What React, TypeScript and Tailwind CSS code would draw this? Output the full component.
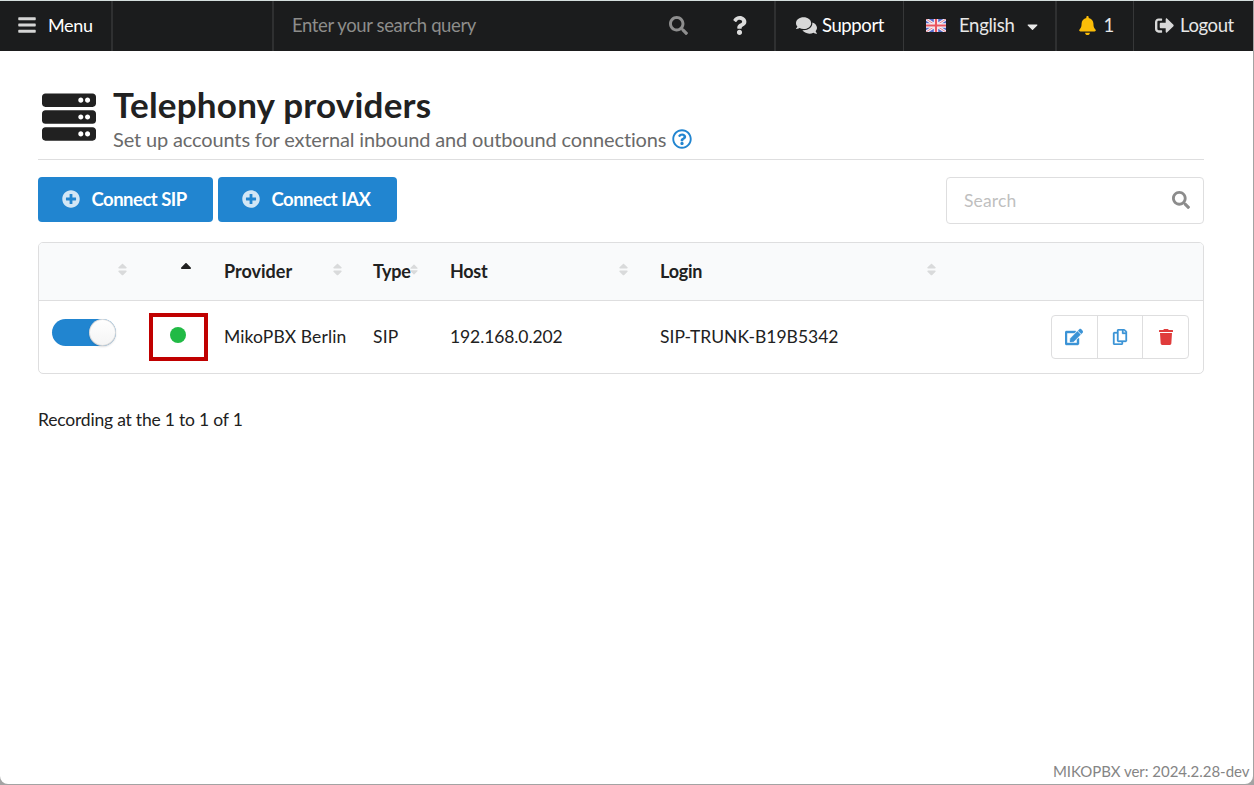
import type { ReactNode } from "react";
import {
  FaBars,
  FaBell,
  FaCaretDown,
  FaComments,
  FaEdit,
  FaPlusCircle,
  FaQuestion,
  FaRegCopy,
  FaRegQuestionCircle,
  FaSearch,
  FaServer,
  FaSignOutAlt,
  FaSort,
  FaSortUp,
  FaTrash,
} from "react-icons/fa";

function UkFlag() {
  return (
    <svg viewBox="0 0 20 13" className="-mt-px h-[13px] w-5 shrink-0">
      <rect width="20" height="13" fill="#5468c8" />
      <path d="M0 0L20 13M20 0L0 13" stroke="#f0f0fa" strokeWidth="3" />
      <path d="M0 0L20 13M20 0L0 13" stroke="#e8808a" strokeWidth="1" />
      <path d="M10 0V13M0 6.5H20" stroke="#f8f4f8" strokeWidth="4.4" />
      <path d="M10 0V13M0 6.5H20" stroke="#ea5560" strokeWidth="2.2" />
    </svg>
  );
}

function NavBar() {
  return (
    <nav className="flex h-[51px] items-stretch border-t border-[#d5dedd] bg-[#1b1c1d] text-[18.5px] text-white/90">
      <div className="flex w-[113px] items-center border-r-2 border-[#2f3031] pl-[17px]">
        <FaBars className="-mt-[2px] size-[20px] text-[#d5d5d5]" />
        <span className="-mt-px ml-[11px] text-[18px] tracking-[-0.35px] text-white">Menu</span>
      </div>
      <div className="w-[161px] border-r-2 border-[#2f3031]" />
      <div className="flex w-[429px] items-center pl-[18px]">
        <span className="tracking-[-0.38px] text-[#8d8d8b]">Enter your search query</span>
        <FaSearch className="-mt-[2px] mr-[15px] ml-auto size-[19px] text-[#8e8e8e]" />
      </div>
      <div className="flex w-[73px] items-center border-r-2 border-[#2f3031] pl-[27px]">
        <FaQuestion className="-mt-[2px] size-[19px] text-[#dcdcdc]" />
      </div>
      <div className="flex w-[128px] items-center border-r border-[#363738] pl-5">
        <FaComments className="-mt-[2px] h-[19px] w-[21px] text-[#d8d8d8]" />
        <span className="ml-[5px] tracking-[-0.4px] text-white">Support</span>
      </div>
      <div className="flex w-[153px] items-center border-r-2 border-[#2f3031] pl-[22px]">
        <UkFlag />
        <span className="ml-[13px] w-[56px] tracking-[-0.3px]">English</span>
        <FaCaretDown className="ml-[9px] size-[17px]" />
      </div>
      <div className="flex w-[77px] items-center border-r border-[#363738] pl-[21px]">
        <FaBell className="-mt-[2px] size-[19px] text-[#fbbd08]" />
        <span className="ml-[6.5px]">1</span>
      </div>
      <div className="flex flex-1 items-center pl-[21px]">
        <FaSignOutAlt className="-mt-[2px] size-[19px] text-[#d8d8d8]" />
        <span className="ml-[6px] tracking-[-0.4px]">Logout</span>
      </div>
    </nav>
  );
}

function ConnectButton({ label, className }: { label: string; className: string }) {
  return (
    <button className={`flex h-[45px] items-center rounded bg-[#2185d0] pl-[23.5px] text-[18.5px] font-bold text-white ${className}`}>
      <FaPlusCircle className="-mt-px size-[18px] opacity-80" />
      <span className="ml-3 tracking-[-0.5px]">{label}</span>
    </button>
  );
}

function HeadCell({ label, labelClass = "", sortMargin, className }: { label?: string; labelClass?: string; sortMargin: string; className: string }) {
  return (
    <div className={`flex items-center ${className}`}>
      <span className={labelClass}>{label}</span>
      <FaSort className={`mb-[5px] ml-auto size-[15px] text-[#d9dadb] ${sortMargin}`} />
    </div>
  );
}

function ActionButton({ children }: { children: ReactNode }) {
  return <button className="flex flex-1 items-center justify-center">{children}</button>;
}

export default function App() {
  return (
    <div className="h-[785px] w-[1254px] bg-[#a3a3a3] font-['Lato',sans-serif] text-[#212121]">
      <div className="flex h-[784px] w-[1253px] flex-col overflow-hidden rounded-b-lg bg-white">
        <NavBar />
        <main className="flex flex-1 flex-col pl-[38px] pr-[49px]">
          <header className="flex h-[109px] items-start border-b border-[#dededf] pt-[39px]">
            <FaServer className="ml-[4px] size-[54px]" />
            <div className="ml-[17px]">
              <h1 className="-mt-[7px] h-[44px] text-[35px] leading-[43px] font-bold tracking-[0.22px]">Telephony providers</h1>
              <div className="flex h-6 items-center text-[20px] leading-6 text-[#6a6a6a]">
                <span className="tracking-[-0.145px]">Set up accounts for external inbound and outbound connections</span>
                <FaRegQuestionCircle className="ml-[6px] size-5 text-[#2185d0]" />
              </div>
            </div>
          </header>

          <div className="mt-[17px] flex h-[47px] items-start">
            <ConnectButton label="Connect SIP" className="w-[175px]" />
            <ConnectButton label="Connect IAX" className="ml-[5px] w-[179px]" />
            <div className="ml-auto flex h-[47px] w-[258px] items-center rounded border border-[#dededf] pr-[13px] pl-[17px] text-[17.5px] text-[#bfbfbf]">
              <span className="pt-px tracking-[0.15px]">Search</span>
              <FaSearch className="-mt-px ml-auto size-[18px] text-[#8c8c8c]" />
            </div>
          </div>

          <section className="mt-[18px] h-[132px] rounded-[5px] border border-[#dededf] text-[17.5px]">
            <div className="flex h-[58px] rounded-t border-b border-[#dededf] bg-[#f9fafb] text-[18px] font-bold">
              <HeadCell className="w-[110px]" sortMargin="mr-[19px]" />
              <div className="flex w-[75px] items-center justify-center">
                <FaSortUp className="-mt-[3px] ml-[-1px] size-[18px]" />
              </div>
              <HeadCell label="Provider" className="w-[149px]" sortMargin="mr-[28.5px]" />
              <HeadCell label="Type" labelClass="w-[37px] tracking-[-0.25px]" className="w-[77px]" sortMargin="mr-[32px] -ml-[6px]" />
              <HeadCell label="Host" labelClass="tracking-[-0.3px]" className="w-[210px]" sortMargin="mr-[29px]" />
              <HeadCell label="Login" labelClass="tracking-[-0.25px]" className="w-[300px]" sortMargin="mr-[21px]" />
            </div>
            <div className="flex h-[72px] items-center">
              <div className="w-[110px] pl-[13px]">
                <div className="-mt-[9px] flex h-[27px] w-16 justify-end rounded-full bg-[#2185d0]">
                  <span className="size-[27px] rounded-full bg-linear-to-b from-white to-[#f4f4f4] shadow-[0_1px_2px_0_rgba(34,36,38,0.15),inset_0_0_0_1px_rgba(34,36,38,0.15)]" />
                </div>
              </div>
              <div className="flex h-[48px] w-[59px] items-center justify-center border-4 border-[#c00000]">
                <span className="-mt-[4px] -ml-px size-4 rounded-full bg-[#21ba45]" />
              </div>
              <div className="ml-4 w-[149px] tracking-[0.12px]">MikoPBX Berlin</div>
              <div className="w-[77px] tracking-[0.2px]">SIP</div>
              <div className="w-[210px] tracking-[-0.1px]">192.168.0.202</div>
              <div>SIP-TRUNK-B19B5342</div>
              <div className="mr-[14px] ml-auto flex h-[44px] w-[138px] divide-x divide-[#dededf] rounded border border-[#dededf]">
                <ActionButton>
                  <FaEdit className="size-[18px] text-[#3b93d6]" stroke="currentColor" strokeWidth="14" />
                </ActionButton>
                <ActionButton>
                  <FaRegCopy className="size-[16px] text-[#3b93d6]" stroke="currentColor" strokeWidth="10" />
                </ActionButton>
                <ActionButton>
                  <FaTrash className="size-[16px] text-[#e03c3c]" />
                </ActionButton>
              </div>
            </div>
          </section>

          <p className="mt-[33px] text-[17.5px] leading-[25px] tracking-[-0.2px]">Recording at the 1 to 1 of 1</p>
        </main>
        <footer className="pr-[3.5px] pb-[3px] text-right text-[15px] leading-5 tracking-[-0.02px] text-[#858585]">
          MIKOPBX ver: 2024.2.28-dev
        </footer>
      </div>
    </div>
  );
}
